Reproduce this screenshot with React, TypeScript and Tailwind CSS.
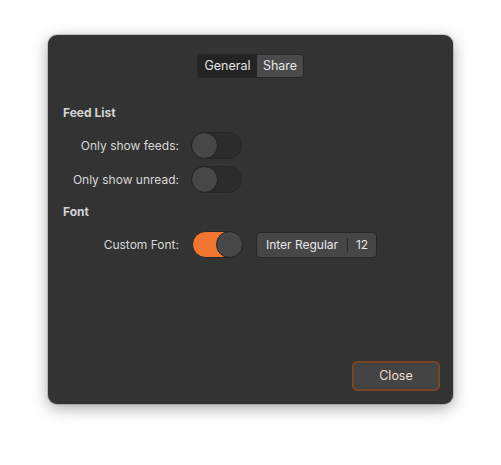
import { useState } from 'react';

function Toggle({ on, onChange }: { on: boolean; onChange: (v: boolean) => void }) {
  return (
    <button
      type="button"
      onClick={() => onChange(!on)}
      className={`flex h-[27px] w-[51px] shrink-0 items-center rounded-full border border-[#262626] p-0 ${
        on ? 'justify-end bg-[#f07630]' : 'justify-start bg-[#2c2c2c]'
      }`}
    >
      <span className="-m-px h-[27px] w-[27px] rounded-full border border-[#222] bg-[#474747]" />
    </button>
  );
}

function Row({ label, children }: { label: string; children: React.ReactNode }) {
  return (
    <div className="flex h-[27px] items-center gap-[12px]">
      <div className="w-[131px] text-right text-[12px] text-[#d8d8d8]">{label}</div>
      {children}
    </div>
  );
}

export default function App() {
  const [tab, setTab] = useState('general');
  const [feeds, setFeeds] = useState(false);
  const [unread, setUnread] = useState(false);
  const [custom, setCustom] = useState(true);

  return (
    <main
      className="h-[465px] w-[501px] bg-white pl-[48px] pt-[35px]"
      style={{ fontFamily: 'Inter, "Noto Sans", sans-serif' }}
    >
      <div className="flex h-[369px] w-[405px] flex-col rounded-[9px] bg-[#333333] shadow-[0_4px_16px_rgba(0,0,0,0.35),0_0_0_1px_rgba(0,0,0,0.15)]">
        <div className="mt-[19px] flex justify-center">
          <div className="flex h-[24px] overflow-hidden rounded-[4px] border border-[#262626] text-[12.5px] text-[#e6e6e6]">
            <button
              type="button"
              onClick={() => setTab('general')}
              className={`w-[59px] ${tab === 'general' ? 'bg-[#242424]' : 'bg-[#4a4a4a]'}`}
            >
              General
            </button>
            <button
              type="button"
              onClick={() => setTab('share')}
              className={`w-[46px] ${tab === 'share' ? 'bg-[#242424]' : 'bg-[#4a4a4a]'}`}
            >
              Share
            </button>
          </div>
        </div>

        <h2 className="ml-[15px] mt-[27px] text-[12px] font-bold leading-[16px] text-[#d4d4d4]">Feed List</h2>
        <div className="mt-[11px] flex flex-col gap-[7px]">
          <Row label="Only show feeds:">
            <Toggle on={feeds} onChange={setFeeds} />
          </Row>
          <Row label="Only show unread:">
            <Toggle on={unread} onChange={setUnread} />
          </Row>
        </div>

        <h2 className="ml-[15px] mt-[11px] text-[12px] font-bold leading-[16px] text-[#d4d4d4]">Font</h2>
        <div className="mt-[11px] flex h-[27px] items-center">
          <div className="w-[131px] text-right text-[12px] text-[#d8d8d8]">Custom Font:</div>
          <div className="ml-[13px]">
            <Toggle on={custom} onChange={setCustom} />
          </div>
          <button
            type="button"
            className="ml-[13px] flex h-[26px] w-[121px] items-center rounded-[4px] border border-[#262626] bg-[#464646] text-[12px] text-[#e8e8e8]"
          >
            <span className="w-[90px] text-center">Inter Regular</span>
            <span className="h-[14px] w-px bg-[#2a2a2a]" />
            <span className="flex-1 text-center">12</span>
          </button>
        </div>

        <div className="mb-[13px] mr-[13px] mt-auto flex justify-end">
          <button
            type="button"
            className="h-[30px] w-[88px] rounded-[5px] border-2 border-[#7a4628] bg-[#444444] text-[12.5px] text-[#f2dccd]"
          >
            Close
          </button>
        </div>
      </div>
    </main>
  );
}
